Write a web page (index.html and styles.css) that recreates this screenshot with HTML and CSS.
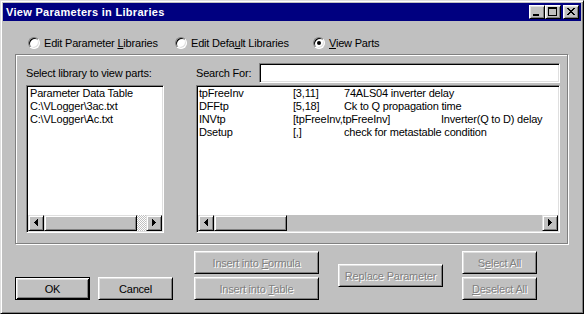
FILE: index.html
```html
<!DOCTYPE html>
<html>
<head>
<meta charset="utf-8">
<link rel="stylesheet" href="styles.css">
</head>
<body>
<div class="window">
  <div class="titlebar">
    <span class="title">View Parameters in Libraries</span>
    <div class="tbtns">
      <span class="tbtn"><svg width="12" height="10" viewBox="0 0 12 10"><rect x="2" y="7" width="6" height="2" fill="#000"/></svg></span>
      <span class="tbtn"><svg width="12" height="10" viewBox="0 0 12 10"><path d="M1 0h9v2h-9z M1 2h1v7h-1z M9 2h1v7h-1z M1 8h9v1h-9z" fill="#000"/></svg></span>
      <span class="tbtn close"><svg width="12" height="10" viewBox="0 0 12 10"><path d="M2 1h2v1h-2z M8 1h2v1h-2z M3 2h2v1h-2z M7 2h2v1h-2z M4 3h4v1h-4z M5 4h2v1h-2z M4 5h4v1h-4z M3 6h2v1h-2z M7 6h2v1h-2z M2 7h2v1h-2z M8 7h2v1h-2z" fill="#000"/></svg></span>
    </div>
  </div>
  <div class="client">
    <div class="radios">
      <div class="ropt o1"><span class="radio"></span><span>Edit Parameter <u>L</u>ibraries</span></div>
      <div class="ropt o2"><span class="radio"></span><span>Edit Defa<u>u</u>lt Libraries</span></div>
      <div class="ropt o3"><span class="radio on"></span><span><u>V</u>iew Parts</span></div>
    </div>
    <div class="group">
      <div class="col colleft">
        <div class="hdr">Select library to view parts:</div>
        <div class="list">
          <div class="items itemsleft">
            <div class="row">Parameter Data Table</div>
            <div class="row">C:\VLogger\3ac.txt</div>
            <div class="row">C:\VLogger\Ac.txt</div>
          </div>
          <div class="hscroll">
            <span class="sbtn"><svg width="12" height="12" viewBox="0 0 12 12"><path d="M4 5h1v1h-1z M5 4h1v3h-1z M6 3h1v5h-1z M7 2h1v7h-1z" fill="#000"/></svg></span>
            <span class="thumb thumbleft"></span>
            <span class="track dither"></span>
            <span class="sbtn"><svg width="12" height="12" viewBox="0 0 12 12"><path d="M4 2h1v7h-1z M5 3h1v5h-1z M6 4h1v3h-1z M7 5h1v1h-1z" fill="#000"/></svg></span>
          </div>
        </div>
      </div>
      <div class="col colright">
        <div class="hdr"><span>Search For:</span><div class="input"></div></div>
        <div class="list">
          <div class="items itemsright">
            <div class="row"><span class="c1">tpFreeInv</span><span class="c2">[3,11]</span><span>74ALS04 inverter delay</span></div>
            <div class="row"><span class="c1">DFFtp</span><span class="c2">[5,18]</span><span>Ck to Q propagation time</span></div>
            <div class="row"><span class="c1">INVtp</span><span class="c2 wide">[tpFreeInv,tpFreeInv]</span><span>Inverter(Q to D) delay</span></div>
            <div class="row"><span class="c1">Dsetup</span><span class="c2">[,]</span><span>check for metastable condition</span></div>
          </div>
          <div class="hscroll">
            <span class="sbtn"><svg width="12" height="12" viewBox="0 0 12 12"><path d="M4 5h1v1h-1z M5 4h1v3h-1z M6 3h1v5h-1z M7 2h1v7h-1z" fill="#000"/></svg></span>
            <span class="thumb thumbright"></span>
            <span class="track"></span>
            <span class="sbtn"><svg width="12" height="12" viewBox="0 0 12 12"><path d="M4 2h1v7h-1z M5 3h1v5h-1z M6 4h1v3h-1z M7 5h1v1h-1z" fill="#000"/></svg></span>
          </div>
        </div>
      </div>
    </div>
    <div class="buttons">
      <div class="bcol bcola">
        <span class="btn default w75"><span>OK</span></span>
        <span class="btn w75"><span>Cancel</span></span>
      </div>
      <div class="bcol stack w125">
        <span class="btn disabled"><span>Insert into <u>F</u>ormula</span></span>
        <span class="btn disabled"><span>Insert into <u>T</u>able</span></span>
      </div>
      <div class="bcol center">
        <span class="btn disabled w105"><span>Replace Parameter</span></span>
      </div>
      <div class="bcol stack w75">
        <span class="btn disabled"><span>S<u>e</u>lect All</span></span>
        <span class="btn disabled"><span><u>D</u>eselect All</span></span>
      </div>
    </div>
  </div>
</div>
</body>
</html>
```

FILE: styles.css
```css
html, body {
  margin: 0;
  padding: 0;
}
body {
  background: #c0c0c0;
  font-family: "Liberation Sans", Arial, sans-serif;
  font-size: 11px;
  letter-spacing: -0.2px;
  color: #000;
}
.window {
  width: 584px;
  height: 314px;
  box-sizing: border-box;
  background: #c0c0c0;
  border: 1px solid;
  border-color: #dfdfdf #000 #000 #dfdfdf;
  box-shadow: inset 1px 1px 0 #fff, inset -1px -1px 0 #808080;
  padding: 2px;
}
.titlebar {
  height: 18px;
  background: #000080;
  display: flex;
  align-items: center;
  padding: 0 2px 0 3px;
}
.title {
  color: #fff;
  font-weight: bold;
  letter-spacing: 0.3px;
  flex: 1;
  line-height: 18px;
}
.tbtns {
  display: flex;
  align-items: center;
}
.tbtn {
  width: 16px;
  height: 14px;
  box-sizing: border-box;
  background: #c0c0c0;
  border: 1px solid;
  border-color: #fff #000 #000 #fff;
  box-shadow: inset 1px 1px 0 #dfdfdf, inset -1px -1px 0 #808080;
  padding: 1px;
  display: flex;
}
.tbtn svg {
  display: block;
}
.tbtn.close {
  margin-left: 2px;
}
.client {
  padding-left: 12px;
}
.radios {
  display: flex;
  margin: 16px 0 0 13px;
  height: 12px;
}
.ropt {
  display: flex;
  align-items: center;
  line-height: 12px;
}
.o1 { width: 147px; }
.o2 { width: 138px; }
.radio {
  width: 12px;
  height: 12px;
  box-sizing: border-box;
  border-radius: 50%;
  background: #fff;
  border: 1px solid;
  border-color: #808080 #fff #fff #808080;
  box-shadow: inset 1px 1px 0 #000, inset -1px -1px 0 #dfdfdf;
  margin-right: 4px;
  position: relative;
  flex: none;
}
.radio.on::after {
  content: "";
  position: absolute;
  left: 3px;
  top: 3px;
  width: 4px;
  height: 4px;
  border-radius: 50%;
  background: #000;
}
.group {
  margin-top: 5px;
  width: 553px;
  height: 190px;
  box-sizing: border-box;
  border: 1px solid #808080;
  box-shadow: 1px 1px 0 #fff, inset 1px 1px 0 #fff;
  display: flex;
  padding: 8px 7px 10px 10px;
}
.col {
  display: flex;
  flex-direction: column;
}
.colleft {
  width: 138px;
  margin-right: 32px;
}
.colright {
  width: 364px;
}
.hdr {
  height: 20px;
  display: flex;
  align-items: center;
  margin-bottom: 2px;
}
.input {
  margin-left: auto;
  width: 301px;
  height: 20px;
  box-sizing: border-box;
  background: #fff;
  border: 1px solid;
  border-color: #808080 #fff #fff #808080;
  box-shadow: inset 1px 1px 0 #000, inset -1px -1px 0 #dfdfdf;
}
.list {
  height: 148px;
  box-sizing: border-box;
  background: #fff;
  border: 1px solid;
  border-color: #808080 #fff #fff #808080;
  box-shadow: inset 1px 1px 0 #000, inset -1px -1px 0 #dfdfdf;
  padding: 1px;
  display: flex;
  flex-direction: column;
}
.items {
  flex: 1;
  line-height: 13px;
  white-space: nowrap;
  overflow: hidden;
}
.itemsleft { padding-left: 2px; }
.itemsright { padding-left: 1px; }
.row {
  height: 13px;
  display: flex;
}
.c1 { width: 94px; flex: none; }
.c2 { width: 51px; flex: none; }
.c2.wide { width: 148px; }
.hscroll {
  height: 16px;
  display: flex;
  background: #c0c0c0;
}
.sbtn, .thumb {
  height: 16px;
  box-sizing: border-box;
  background: #c0c0c0;
  border: 1px solid;
  border-color: #dfdfdf #000 #000 #dfdfdf;
  box-shadow: inset 1px 1px 0 #fff, inset -1px -1px 0 #808080;
  flex: none;
}
.sbtn {
  width: 16px;
  padding: 1px;
  display: flex;
}
.sbtn svg { display: block; }
.thumbleft { width: 93px; }
.thumbright { width: 73px; }
.track {
  flex: 1;
  background: #c0c0c0;
}
.track.dither {
  background: repeating-conic-gradient(#fff 0 25%, #c0c0c0 0 50%) 0 0 / 2px 2px;
}
.buttons {
  margin-top: 7px;
  height: 49px;
  display: flex;
}
.bcol {
  display: flex;
}
.bcola {
  align-items: flex-end;
  gap: 8px;
  margin-right: 21px;
}
.stack {
  flex-direction: column;
  gap: 3px;
}
.center {
  align-items: center;
  margin: 0 19px;
}
.w75 { width: 75px; }
.w125 { width: 125px; }
.w105 { width: 105px; }
.btn {
  height: 23px;
  box-sizing: border-box;
  display: flex;
  align-items: center;
  justify-content: center;
  background: #c0c0c0;
  border: 1px solid;
  border-color: #fff #000 #000 #fff;
  box-shadow: inset 1px 1px 0 #dfdfdf, inset -1px -1px 0 #808080;
  white-space: nowrap;
}
.btn.default {
  border-color: #000;
  box-shadow: inset 1px 1px 0 #fff, inset -1px -1px 0 #000, inset 2px 2px 0 #dfdfdf, inset -2px -2px 0 #808080;
}
.btn.disabled {
  color: #808080;
  text-shadow: 1px 1px 0 #fff;
}
```
